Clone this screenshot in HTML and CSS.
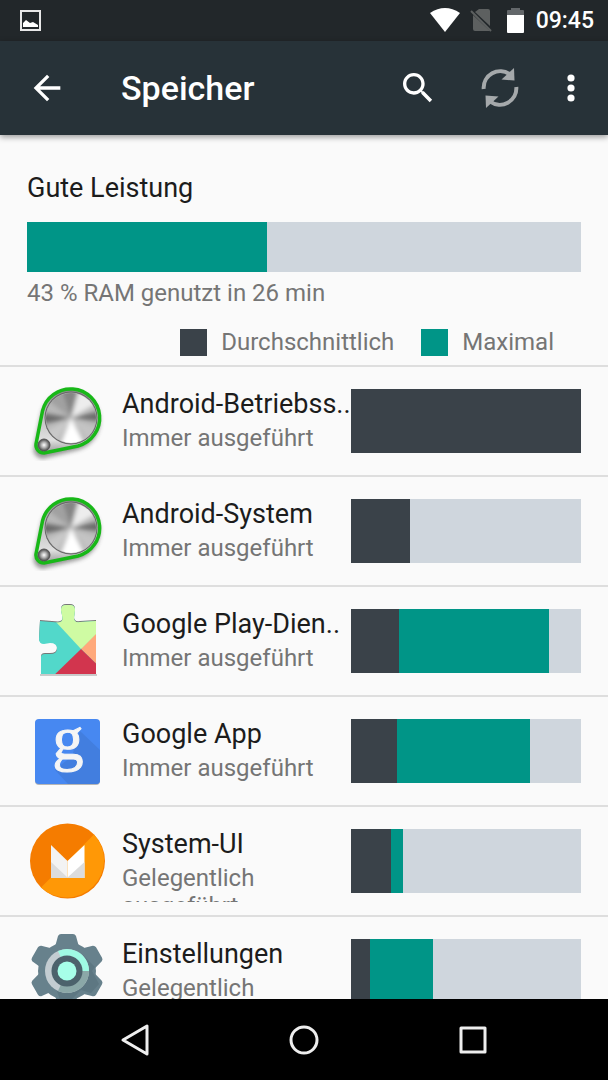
FILE: index.html
```html
<!DOCTYPE html>
<html lang="de">
<head>
    <meta charset="UTF-8">
    <meta name="viewport" content="width=device-width, initial-scale=1.0">
    <title>Speicher</title>
    <link rel="stylesheet" href="styles.css">
</head>
<body>
    <!-- Shared icon shapes -->
    <svg class="defs" width="0" height="0" aria-hidden="true">
        <defs>
            <clipPath id="disc"><circle cx="44" cy="37" r="25"/></clipPath>
            <filter id="soft" x="-20%" y="-20%" width="140%" height="140%"><feGaussianBlur stdDeviation="2"/></filter>
            <linearGradient id="plate" x1="0" y1="0" x2="0" y2="1">
                <stop offset="0" stop-color="#888"/>
                <stop offset="0.3" stop-color="#b5b5b5"/>
                <stop offset="0.8" stop-color="#e0e0e0"/>
                <stop offset="1" stop-color="#999"/>
            </linearGradient>
            <radialGradient id="knob">
                <stop offset="0" stop-color="#fff"/>
                <stop offset="0.5" stop-color="#aaa"/>
                <stop offset="1" stop-color="#444"/>
            </radialGradient>
        </defs>
        <symbol id="pulley" viewBox="0 0 80 80">
            <path d="M14 31A30 30 0 1 1 51 67L19 75A9 9 0 0 1 7 64Z" fill="#555" opacity="0.6" filter="url(#soft)" transform="translate(0 2)"/>
            <path d="M15.500 30A29 29 0 1 1 51 65L17 72A8 8 0 0 1 9 63Z" fill="url(#plate)" stroke="#18b818" stroke-width="3.500" stroke-linejoin="round"/>
            <circle cx="44" cy="37" r="26.500" fill="#666"/>
            <circle cx="44" cy="37" r="25.500" fill="#aaa"/>
            <g clip-path="url(#disc)">
                <rect x="18" y="11" width="52" height="52" fill="#b8b8b8"/>
                <g filter="url(#soft)">
                    <path d="M44 37L10 31V44Z" fill="#6a6a6a"/>
                    <path d="M44 37L80 29V41Z" fill="#6a6a6a"/>
                    <path d="M44 37L14 14L30 4Z" fill="#a0a0a0"/>
                    <path d="M44 37L32 4H52Z" fill="#858585"/>
                    <path d="M44 37L54 4L74 20Z" fill="#ededed"/>
                    <path d="M44 37L30 72H62Z" fill="#fff"/>
                    <path d="M44 37L12 54L24 70Z" fill="#c9c9c9"/>
                    <path d="M44 37L76 50L68 68Z" fill="#c4c4c4"/>
                </g>
            </g>
            <circle cx="17" cy="64" r="6" fill="url(#knob)" stroke="#555"/>
        </symbol>
    </svg>

    <div class="status-bar">
        <svg class="status-left" width="21" height="21" viewBox="0 0 21 21" aria-hidden="true">
            <rect x="1" y="1" width="19" height="19" fill="none" stroke="#e8e8e8" stroke-width="2"/>
            <path d="M3 17V13L6 10L10 13L13 12L18 15V17Z" fill="#fff"/>
        </svg>
        <svg width="30" height="25" viewBox="0 0 30 25" aria-hidden="true">
            <path d="M0 5Q15 -5 30 5L15 24Z" fill="#fff"/>
        </svg>
        <svg class="sim" width="22" height="25" viewBox="0 0 22 25" aria-hidden="true">
            <path d="M9 1H18Q20 1 20 3V18L5 4ZM3 7L20 23H5Q3 23 3 21Z" fill="#5d6060"/>
            <path d="M1 3L21 23" stroke="#5d6060" stroke-width="2"/>
        </svg>
        <svg class="battery" width="17" height="25" viewBox="0 0 17 25" aria-hidden="true">
            <path d="M0 7V3Q0 2 1 2H4V0H13V2H16Q17 2 17 3V7Z" fill="#63676a"/>
            <path d="M0 7H17V24Q17 25 16 25H1Q0 25 0 24Z" fill="#fff"/>
        </svg>
        <span class="clock">09:45</span>
    </div>

    <header class="app-bar">
        <button type="button" aria-label="Zurück">
            <svg width="40" height="40" viewBox="0 0 24 24"><path d="M20 11H7.830l5.590-5.590L12 4l-8 8 8 8 1.410-1.410L7.830 13H20v-2z" fill="#fff"/></svg>
        </button>
        <h1>Speicher</h1>
        <div class="actions">
            <button type="button" aria-label="Suchen">
                <svg width="40" height="40" viewBox="0 0 24 24"><path d="M15.500 14h-.790l-.280-.270C15.410 12.590 16 11.110 16 9.500 16 5.910 13.090 3 9.500 3S3 5.910 3 9.500 5.910 16 9.500 16c1.610 0 3.090-.590 4.230-1.570l.270.280v.790l5 4.990L20.490 19l-4.990-5zm-6 0C7.010 14 5 11.990 5 9.500S7.010 5 9.500 5 14 7.010 14 9.500 11.990 14 9.500 14z" fill="#fff"/></svg>
            </button>
            <button type="button" aria-label="Aktualisieren">
                <svg width="40" height="40" viewBox="0 0 40 40">
                    <g id="turn">
                        <path d="M3.700 21A16.500 16.500 0 0 1 30 6.500" fill="none" stroke="#a5a9ab" stroke-width="4"/>
                        <path d="M34 0L34.500 12.500L21.500 11.500Z" fill="#a5a9ab"/>
                    </g>
                    <use href="#turn" transform="rotate(180 20 20)"/>
                </svg>
            </button>
            <button type="button" aria-label="Weitere Optionen">
                <svg width="18" height="40" viewBox="0 0 18 40"><g fill="#fff"><circle cx="9" cy="10" r="3.600"/><circle cx="9" cy="20" r="3.600"/><circle cx="9" cy="30" r="3.600"/></g></svg>
            </button>
        </div>
    </header>

    <main>
        <section class="summary">
            <h2>Gute Leistung</h2>
            <div class="bar total"><span class="max" style="width: 43.4%"></span></div>
            <p>43 % RAM genutzt in 26 min</p>
            <div class="legend">
                <span class="swatch avg"></span><span class="key">Durchschnittlich</span>
                <span class="swatch max"></span><span class="key">Maximal</span>
            </div>
        </section>

        <ul class="apps">
            <li>
                <svg class="icon" viewBox="0 0 80 80" aria-hidden="true"><use href="#pulley"/></svg>
                <div class="info"><h3>Android-Betriebss..</h3><p>Immer ausgeführt</p></div>
                <div class="bar"><span class="avg" style="width: 100%"></span></div>
            </li>
            <li>
                <svg class="icon" viewBox="0 0 80 80" aria-hidden="true"><use href="#pulley"/></svg>
                <div class="info"><h3>Android-System</h3><p>Immer ausgeführt</p></div>
                <div class="bar"><span class="avg" style="width: 25.7%"></span></div>
            </li>
            <li>
                <svg class="icon" viewBox="0 0 80 80" aria-hidden="true">
                    <clipPath id="piece"><path id="piece-shape" d="M13 20L31 21.500Q36 21 35.500 17L34 9Q34 4 39 4H43Q48 4 48 9L47 17Q47 22 53 21L69 20V73H14V56Q14 53 18 53H23Q30 53 30 47.500Q30 42 23 42L17 43Q12 43 12 38Z"/></clipPath>
                    <use href="#piece-shape" fill="#777" transform="translate(0 -1)"/>
                    <path d="M13 74H70" stroke="#999"/>
                    <g clip-path="url(#piece)">
                        <rect width="80" height="80" fill="#52d8ca"/>
                        <path d="M29 21V0H80V21L54 48Z" fill="#cffba3"/>
                        <path d="M54 48L80 21V73Z" fill="#ffa97b"/>
                        <path d="M54 48L80 73V80H21Z" fill="#d2354e"/>
                        <path d="M69 20V33L54 48Z" fill="#cffba3"/>
                    </g>
                </svg>
                <div class="info"><h3>Google Play-Dien..</h3><p>Immer ausgeführt</p></div>
                <div class="bar"><span class="avg" style="width: 20.7%"></span><span class="max" style="width: 65.2%"></span></div>
            </li>
            <li>
                <svg class="icon" viewBox="0 0 80 80" aria-hidden="true">
                    <rect x="8" y="9" width="65" height="65" rx="4" fill="#b5b5b5"/>
                    <rect x="8" y="8" width="65" height="65" rx="4" fill="#4788f1"/>
                    <path d="M53 20L73 39V69Q73 73 69 73H41L28 59L45 45Z" fill="#427edf"/>
                    <text class="g" x="41" y="48" text-anchor="middle">g</text>
                </svg>
                <div class="info"><h3>Google App</h3><p>Immer ausgeführt</p></div>
                <div class="bar"><span class="avg" style="width: 20%"></span><span class="max" style="width: 58%"></span></div>
            </li>
            <li>
                <svg class="icon" viewBox="0 0 80 80" aria-hidden="true">
                    <circle cx="40.500" cy="40" r="37.500" fill="#f57c00"/>
                    <path d="M67 13.500A37.500 37.500 0 0 1 14 66.500Z" fill="#ff9806"/>
                    <path d="M24 24L40.500 40V57H24Z" fill="#f3f3f3"/>
                    <path d="M57.500 24L40.500 40V57H57.500Z" fill="#fff"/>
                    <path d="M24 41L40.500 56.500L57.500 41V57H24Z" fill="#dcdcdc"/>
                </svg>
                <div class="info"><h3>System-UI</h3><p>Gelegentlich ausgeführt</p></div>
                <div class="bar"><span class="avg" style="width: 17.3%"></span><span class="max" style="width: 5.3%"></span></div>
            </li>
            <li>
                <svg class="icon" viewBox="0 0 80 80" aria-hidden="true">
                    <g fill="#67818c">
                        <circle cx="40" cy="40" r="29"/>
                        <path id="tooth" d="M28 16L31 5Q32 3 34 3H46Q48 3 49 5L52 16L50 64L49 75Q48 77 46 77H34Q32 77 31 75L28 64Z"/>
                        <use href="#tooth" transform="rotate(60 40 40)"/>
                        <use href="#tooth" transform="rotate(120 40 40)"/>
                    </g>
                    <path d="M56 24L68 36L65 40L72 53L64 62L54 59L45 68V77H36L30 60Z" fill="#5d7782"/>
                    <circle cx="40" cy="40" r="22" fill="#c3ccd1"/>
                    <path d="M40 40L31 20A22 22 0 0 1 62 40Z" fill="#9ffbe4"/>
                    <path d="M40 40H62A22 22 0 0 1 31 60Z" fill="#8ba8a8"/>
                    <circle cx="40" cy="40" r="15.500" fill="#4c626c"/>
                    <circle cx="40" cy="40" r="9.500" fill="#a7ffe9"/>
                </svg>
                <div class="info"><h3>Einstellungen</h3><p>Gelegentlich ausgeführt</p></div>
                <div class="bar"><span class="avg" style="width: 8.2%"></span><span class="max" style="width: 27.4%"></span></div>
            </li>
        </ul>
    </main>

    <nav class="nav-bar">
        <button type="button" aria-label="Zurück">
            <svg width="34" height="34" viewBox="0 0 34 34"><path d="M5 17L29 3V31Z"/></svg>
        </button>
        <button type="button" aria-label="Startseite">
            <svg width="34" height="34" viewBox="0 0 34 34"><circle cx="17" cy="17" r="13"/></svg>
        </button>
        <button type="button" aria-label="Übersicht">
            <svg width="34" height="34" viewBox="0 0 34 34"><rect x="5" y="5" width="24" height="24"/></svg>
        </button>
    </nav>
</body>
</html>
```
FILE: styles.css
```css
* { box-sizing: border-box; }
body { margin: 0; height: 100vh; display: flex; flex-direction: column; background: #fafafa; color: #1c1c1c; font-family: Roboto, "Liberation Sans", sans-serif; }
h1, h2, h3, p, ul { margin: 0; padding: 0; font-weight: 400; }
button { padding: 0; border: none; background: none; cursor: pointer; }
svg { display: block; }
.defs { position: absolute; }

.status-bar { flex: none; display: flex; align-items: center; height: 41px; padding: 0 14px 0 20px; background: #22272a; }
.status-left { margin-right: auto; }
.sim { margin-left: 10px; }
.battery { margin: 0 12px 0 15px; }
.clock { color: #fff; font-size: 23px; font-weight: 500; line-height: 28px; }

.app-bar { flex: none; display: flex; align-items: center; height: 94px; padding: 0 28px 0 27px; background: #273238; box-shadow: 0 2px 6px rgba(0,0,0,0.4); z-index: 1; }
.app-bar h1 { margin-left: 54px; color: #fff; font-size: 34px; font-weight: 500; line-height: 40px; }
.actions { display: flex; gap: 42px; margin-left: auto; }

main { flex: 1; min-height: 0; overflow-y: auto; scrollbar-width: none; }
.summary { padding: 37px 27px 9px; border-bottom: 2px solid #dedede; }
h2, h3 { font-size: 27px; line-height: 32px; }
p, .key { color: #757575; font-size: 24px; line-height: 28px; }

.bar { display: flex; height: 64px; background: #cfd6dd; }
.bar.total { height: 50px; margin: 18px 0 7px; }
.avg { background: #3a4249; }
.max { background: #009587; }

.legend { display: flex; align-items: center; justify-content: flex-end; margin-top: 21px; padding-right: 27px; }
.swatch { width: 27px; height: 27px; margin-right: 14px; }
.key + .swatch { margin-left: 27px; }

.apps { list-style: none; }
.apps li { display: grid; grid-template-columns: 95px minmax(0, 1fr) 230px; align-items: center; height: 110px; padding: 0 27px; border-bottom: 2px solid #dedede; }
.icon { width: 80px; height: 80px; }
.info { height: 82px; padding-top: 8px; overflow: hidden; }
.info h3 { margin-bottom: 4px; white-space: nowrap; }
.g { fill: #f5f5f5; stroke: #f5f5f5; stroke-width: 1; font-family: "Liberation Serif", serif; font-size: 62px; }

.nav-bar { flex: none; display: flex; justify-content: center; align-items: center; gap: 135px; height: 81px; background: #000; }
.nav-bar svg { fill: none; stroke: #eee; stroke-width: 3; stroke-linejoin: round; }
```
